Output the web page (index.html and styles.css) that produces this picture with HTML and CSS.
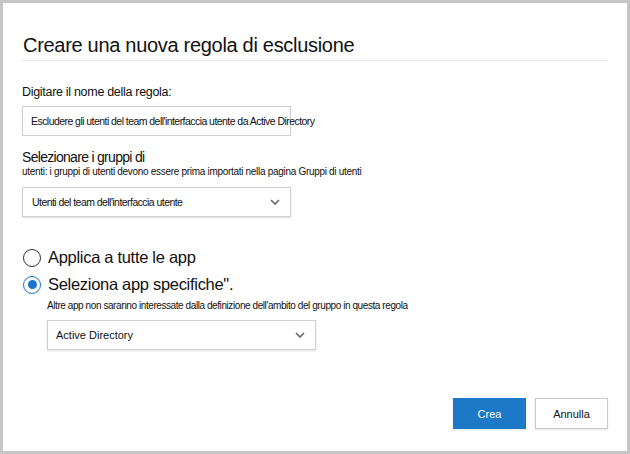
FILE: index.html
```html
<!DOCTYPE html>
<html lang="it">
<head>
  <meta charset="UTF-8" />
  <title>Creare una nuova regola di esclusione</title>
  <link rel="stylesheet" href="styles.css">
</head>
<body>
  <div class="dialog">
    <h1 class="title">Creare una nuova regola di esclusione</h1>

    <div class="field">
      <label class="label" for="ruleName">Digitare il nome della regola:</label>
      <div class="box input" id="ruleName">Escludere gli utenti del team dell'interfaccia utente da Active Directory</div>
    </div>

    <div class="field groups">
      <div class="label-big">Selezionare i gruppi di</div>
      <div class="hint">utenti: i gruppi di utenti devono essere prima importati nella pagina Gruppi di utenti</div>
      <div class="box select">
        <span>Utenti del team dell'interfaccia utente</span>
        <svg class="chevron" width="10" height="6" viewBox="0 0 10 6"><path d="M1 1l4 4 4-4" fill="none" stroke="#666" stroke-width="1.6"/></svg>
      </div>
    </div>

    <div class="options">
      <div class="radio-row">
        <span class="radio"></span>
        <span class="radio-label">Applica a tutte le app</span>
      </div>
      <div class="radio-row">
        <span class="radio checked"></span>
        <span class="radio-label">Seleziona app specifiche".</span>
      </div>
      <div class="sub">
        <div class="hint">Altre app non saranno interessate dalla definizione dell'ambito del gruppo in questa regola</div>
        <div class="box select app">
          <span>Active Directory</span>
          <svg class="chevron" width="10" height="6" viewBox="0 0 10 6"><path d="M1 1l4 4 4-4" fill="none" stroke="#666" stroke-width="1.6"/></svg>
        </div>
      </div>
    </div>

    <div class="actions">
      <button class="btn primary">Crea</button>
      <button class="btn">Annulla</button>
    </div>
  </div>
</body>
</html>
```

FILE: styles.css
```css
* {
  box-sizing: border-box;
  margin: 0;
  padding: 0;
}

body {
  font-family: 'Liberation Sans', Arial, sans-serif;
  color: #111;
  background: #fff;
}

.dialog {
  width: 630px;
  height: 454px;
  border: 3px solid #c6c6c6;
  background: #fff;
  padding: 30px 19px 0 19px;
}

.title {
  font-size: 20px;
  font-weight: normal;
  letter-spacing: -0.3px;
  padding: 0 0 3px 1px;
  border-bottom: 1px solid #e8e8e8;
  line-height: 24px;
}

.field {
  margin-top: 23px;
}

.label {
  display: block;
  font-size: 12.5px;
  letter-spacing: -0.3px;
  line-height: 16px;
  margin-bottom: 6px;
}

.box {
  width: 269px;
  height: 30px;
  border: 1px solid #cfcfcf;
  background: #fff;
  display: flex;
  align-items: center;
  font-size: 10.5px;
  letter-spacing: -0.55px;
  white-space: nowrap;
}

.input {
  padding-left: 8px;
}

.select {
  justify-content: space-between;
  padding: 0 10px 0 9px;
  box-shadow: 0 1px 2px rgba(0,0,0,0.12);
}

.select.app {
  font-size: 11px;
  letter-spacing: 0;
  padding-left: 8px;
}

.groups {
  margin-top: 13px;
}

.label-big {
  font-size: 14px;
  letter-spacing: -0.7px;
  line-height: 16px;
}

.hint {
  font-size: 10px;
  letter-spacing: -0.3px;
  line-height: 13px;
  margin-bottom: 9px;
}

.options {
  margin-top: 27px;
}

.radio-row {
  display: flex;
  align-items: center;
  gap: 7px;
  height: 27px;
}

.radio {
  width: 18px;
  height: 18px;
  border: 1.5px solid #333;
  border-radius: 50%;
  margin-left: 1px;
  display: flex;
  align-items: center;
  justify-content: center;
}

.radio.checked {
  border-color: #1a73c8;
}

.radio.checked::after {
  content: "";
  width: 9px;
  height: 9px;
  border-radius: 50%;
  background: #1a73c8;
}

.radio-label {
  font-size: 16.5px;
  letter-spacing: -0.3px;
}

.sub {
  padding-left: 25px;
  margin-top: 1px;
}

.sub .hint {
  letter-spacing: -0.42px;
  margin-bottom: 8px;
}

.actions {
  display: flex;
  justify-content: flex-end;
  gap: 9px;
  margin-top: 48px;
}

.btn {
  width: 73px;
  height: 31px;
  font-family: 'Liberation Sans', Arial, sans-serif;
  font-size: 11px;
  background: #fff;
  border: 1px solid #c8c8c8;
  color: #111;
  box-shadow: 0 1px 2px rgba(0,0,0,0.1);
}

.btn.primary {
  background: #1e78c8;
  border-color: #1e78c8;
  color: #fff;
}
```
